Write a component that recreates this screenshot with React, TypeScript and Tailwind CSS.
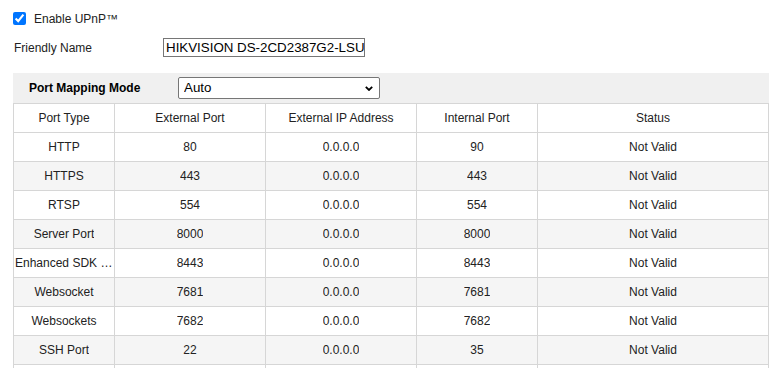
const rows = [
  { type: "HTTP", ext: "80", ip: "0.0.0.0", int: "90", status: "Not Valid" },
  { type: "HTTPS", ext: "443", ip: "0.0.0.0", int: "443", status: "Not Valid" },
  { type: "RTSP", ext: "554", ip: "0.0.0.0", int: "554", status: "Not Valid" },
  { type: "Server Port", ext: "8000", ip: "0.0.0.0", int: "8000", status: "Not Valid" },
  { type: "Enhanced SDK Service Port", ext: "8443", ip: "0.0.0.0", int: "8443", status: "Not Valid" },
  { type: "Websocket", ext: "7681", ip: "0.0.0.0", int: "7681", status: "Not Valid" },
  { type: "Websockets", ext: "7682", ip: "0.0.0.0", int: "7682", status: "Not Valid" },
  { type: "SSH Port", ext: "22", ip: "0.0.0.0", int: "35", status: "Not Valid" },
  { type: "", ext: "", ip: "", int: "", status: "" },
];

const cell = "h-[29px] flex items-center justify-center border-r border-b border-[#d6d6d6] px-px";

export default function App() {
  return (
    <div className="w-[770px] h-[368px] overflow-hidden bg-white pl-[13px] text-[12px] text-[#222] font-['Liberation_Sans',Arial,sans-serif]">
      <label className="flex items-center pt-[12px] h-[25px]">
        <input type="checkbox" defaultChecked className="w-[13px] h-[13px] m-0" />
        <span className="ml-[8px]">Enable UPnP™</span>
      </label>

      <div className="flex items-center mt-[13px] h-[19px]">
        <span className="w-[150px] pl-px">Friendly Name</span>
        <input
          defaultValue="HIKVISION DS-2CD2387G2-LSU"
          className="w-[202px] h-[19px] border border-[#767676] pl-[2px] text-[13.33px] text-black outline-none"
        />
      </div>

      <div className="mt-[16px] w-[756px] h-[30px] bg-[#f0f0f0] flex items-center">
        <span className="w-[165px] pl-[16px] font-bold text-black">Port Mapping Mode</span>
        <div className="relative">
          <select className="appearance-none w-[202px] h-[22px] border border-[#767676] rounded-[2px] bg-white pl-[5px] text-[13.33px] text-black outline-none">
            <option>Auto</option>
            <option>Manual</option>
          </select>
          <svg
            className="absolute right-[7px] top-[9px] pointer-events-none"
            width="8"
            height="5"
            viewBox="0 0 8 5"
            fill="none"
          >
            <path d="M0.8 0.8 L4 4 L7.2 0.8" stroke="#000" strokeWidth="1.8" />
          </svg>
        </div>
      </div>

      <div className="grid grid-cols-[101px_151px_151px_121px_231px] w-[756px] border-l border-t border-[#d6d6d6]">
        {["Port Type", "External Port", "External IP Address", "Internal Port", "Status"].map((h) => (
          <div key={h} className={cell}>
            {h}
          </div>
        ))}
        {rows.map((r, i) => {
          const bg = i % 2 === 1 ? "bg-[#f5f5f5]" : "bg-white";
          return [r.type, r.ext, r.ip, r.int, r.status].map((v, j) => (
            <div key={`${i}-${j}`} className={`${cell} ${bg}`}>
              <span className="truncate block min-w-0">{v}</span>
            </div>
          ));
        })}
      </div>
    </div>
  );
}
